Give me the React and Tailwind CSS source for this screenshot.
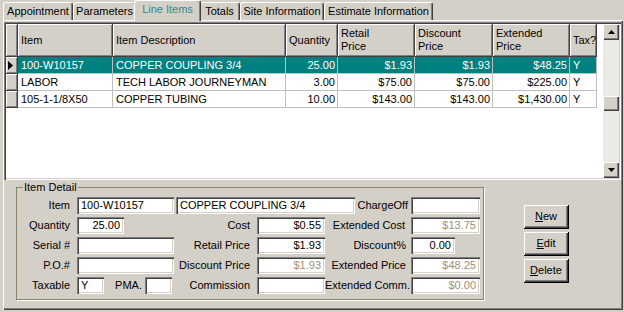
import React from "react";

const raised = "shadow-[inset_1px_1px_#ffffff,inset_-1px_-1px_#404040,inset_-2px_-2px_#808080]";
const sunken = "shadow-[inset_1px_1px_#808080,inset_2px_2px_#404040,inset_-1px_-1px_#ffffff,inset_-2px_-2px_#d4d0c8]";

const rows = [
  { item: "100-W10157", desc: "COPPER COUPLING 3/4", qty: "25.00", retail: "$1.93", disc: "$1.93", ext: "$48.25", tax: "Y", sel: true },
  { item: "LABOR", desc: "TECH LABOR JOURNEYMAN", qty: "3.00", retail: "$75.00", disc: "$75.00", ext: "$225.00", tax: "Y" },
  { item: "105-1-1/8X50", desc: "COPPER TUBING", qty: "10.00", retail: "$143.00", disc: "$143.00", ext: "$1,430.00", tax: "Y" },
];

const tabs = [
  { label: "Appointment", w: "w-[70px]" },
  { label: "Parameters", w: "w-[63px]" },
  { label: "Line Items", w: "w-[67px]", active: true },
  { label: "Totals", w: "w-[41px]" },
  { label: "Site Information", w: "w-[84px]" },
  { label: "Estimate Information", w: "w-[109px]" },
];

function Tab({ label, w, active }) {
  if (active) {
    return (
      <div className={`${w} -mx-[2px] -mb-[1px] h-[21px] relative z-10 bg-[#d4d0c8] rounded-t-[3px] border-l border-t border-white border-r border-r-[#404040] shadow-[inset_-1px_0_#808080] text-center pt-[2px] leading-[13px] text-[#2f8a8a]`}>
        {label}
      </div>
    );
  }
  return (
    <div className={`${w} h-[18px] rounded-t-[3px] border-l border-t border-white border-r border-r-[#404040] shadow-[inset_-1px_0_#808080] text-center pt-[2px] leading-[13px]`}>
      {label}
    </div>
  );
}

function HeadCell({ children, right }) {
  return (
    <div className={`h-[33px] bg-[#d4d0c8] border-r border-b border-[#404040] shadow-[inset_1px_1px_#ffffff,inset_-1px_-1px_#808080] flex items-center px-[3px] leading-[13px] ${right ? "justify-end" : ""}`}>
      <span>{children}</span>
    </div>
  );
}

function Cell({ children, right, sel }) {
  return (
    <div className={`h-[17px] border-r border-b border-[#c0c0c0] px-[2px] leading-[16px] whitespace-nowrap overflow-hidden ${right ? "text-right" : "pl-[3px]"} ${sel ? "bg-[#008080] text-white" : ""}`}>
      {children}
    </div>
  );
}

function ScrollBtn({ up }) {
  return (
    <div className={`h-[16px] w-[16px] bg-[#d4d0c8] ${raised} flex items-center justify-center`}>
      <svg width="7" height="4" viewBox="0 0 7 4">
        {up ? <polygon points="3.5,0 7,4 0,4" fill="#000" /> : <polygon points="0,0 7,0 3.5,4" fill="#000" />}
      </svg>
    </div>
  );
}

function Field({ w, value, right, gray }) {
  return (
    <div className={`${w} h-[17px] bg-white ${sunken} px-[4px] leading-[17px] whitespace-nowrap overflow-hidden ${right ? "text-right" : ""} ${gray ? "text-[#9e9078]" : ""}`}>
      {value}
    </div>
  );
}

function Label({ w, pr, children }) {
  return <div className={`${w} ${pr} text-right leading-[17px] whitespace-nowrap`}>{children}</div>;
}

function Button({ children }) {
  return (
    <div className={`w-[45px] h-[24px] bg-[#d4d0c8] ${raised} border-r border-b border-[#000000] flex items-center justify-center leading-[13px]`}>
      {children}
    </div>
  );
}

export default function App() {
  return (
    <div className="w-[624px] h-[312px] bg-[#d4d0c8] overflow-hidden text-[11px] text-black font-['Liberation_Sans',Arial,sans-serif]">
      <div className="h-[20px] flex items-end pl-[3px]">
        {tabs.map((t) => (
          <Tab key={t.label} {...t} />
        ))}
      </div>

      <div className="ml-[3px] w-[620px] h-[290px] border-l border-t border-white shadow-[inset_-1px_-1px_#404040,inset_-2px_-2px_#808080]">
        <div className="mt-[1px] w-[617px] h-[158px] shadow-[inset_1px_1px_#808080,inset_2px_2px_#404040,inset_-1px_-1px_#ffffff,inset_-2px_-2px_#d4d0c8] p-[2px] flex">
          <div className="flex-1 bg-white">
            <div className="grid grid-cols-[12px_95px_173px_52px_77px_78px_77px_27px]">
              <HeadCell />
              <HeadCell>Item</HeadCell>
              <HeadCell>Item Description</HeadCell>
              <HeadCell>Quantity</HeadCell>
              <HeadCell>Retail<br />Price</HeadCell>
              <HeadCell>Discount<br />Price</HeadCell>
              <HeadCell>Extended<br />Price</HeadCell>
              <HeadCell>Tax?</HeadCell>
              {rows.map((r) => (
                <React.Fragment key={r.item}>
                  <div className="h-[17px] bg-[#d4d0c8] border-r border-b border-[#404040] shadow-[inset_1px_1px_#ffffff,inset_-1px_-1px_#808080] flex items-center pl-[2px]">
                    {r.sel && (
                      <svg width="5" height="9" viewBox="0 0 5 9">
                        <polygon points="0,0 5,4.5 0,9" fill="#000" />
                      </svg>
                    )}
                  </div>
                  <Cell sel={r.sel}>{r.item}</Cell>
                  <Cell sel={r.sel}>{r.desc}</Cell>
                  <Cell sel={r.sel} right>{r.qty}</Cell>
                  <Cell sel={r.sel} right>{r.retail}</Cell>
                  <Cell sel={r.sel} right>{r.disc}</Cell>
                  <Cell sel={r.sel} right>{r.ext}</Cell>
                  <Cell sel={r.sel}>{r.tax}</Cell>
                </React.Fragment>
              ))}
            </div>
          </div>
          <div className="w-[16px] flex flex-col bg-[#ebe9e3]">
            <ScrollBtn up />
            <div className="flex-1">
              <div className={`mt-[56px] h-[15px] w-[16px] bg-[#d4d0c8] ${raised}`} />
            </div>
            <ScrollBtn />
          </div>
        </div>

        <div className="flex">
          <fieldset className="ml-[12px] mt-[1px] w-[468px] h-[119px] border border-[#8c8268] shadow-[1px_1px_0_#ffffff] px-0 pt-[3px]">
            <legend className="ml-[6px] px-[1px] leading-[13px]">Item Detail</legend>
            <div className="flex flex-col gap-[3px]">
              <div className="flex">
                <Label w="w-[60px]" pr="pr-[7px]">Item</Label>
                <Field w="w-[97px]" value="100-W10157" />
                <div className="w-[2px]" />
                <Field w="w-[179px]" value="COPPER COUPLING 3/4" />
                <Label w="w-[56px]" pr="pr-[3px]">ChargeOff</Label>
                <Field w="w-[69px]" value="" />
              </div>
              <div className="flex">
                <Label w="w-[60px]" pr="pr-[7px]">Quantity</Label>
                <Field w="w-[47px]" value="25.00" right />
                <Label w="w-[133px]" pr="pr-[7px]">Cost</Label>
                <Field w="w-[68px]" value="$0.55" right />
                <Label w="w-[86px]" pr="pr-[6px]">Extended Cost</Label>
                <Field w="w-[69px]" value="$13.75" right gray />
              </div>
              <div className="flex">
                <Label w="w-[60px]" pr="pr-[7px]">Serial #</Label>
                <Field w="w-[97px]" value="" />
                <Label w="w-[83px]" pr="pr-[7px]">Retail Price</Label>
                <Field w="w-[68px]" value="$1.93" right />
                <Label w="w-[86px]" pr="pr-[5px]">Discount%</Label>
                <Field w="w-[44px]" value="0.00" right />
              </div>
              <div className="flex">
                <Label w="w-[60px]" pr="pr-[7px]">P.O.#</Label>
                <Field w="w-[97px]" value="" />
                <Label w="w-[83px]" pr="pr-[7px]">Discount Price</Label>
                <Field w="w-[68px]" value="$1.93" right gray />
                <Label w="w-[86px]" pr="pr-[5px]">Extended Price</Label>
                <Field w="w-[69px]" value="$48.25" right gray />
              </div>
              <div className="flex">
                <Label w="w-[60px]" pr="pr-[7px]">Taxable</Label>
                <Field w="w-[27px]" value="Y" />
                <Label w="w-[41px]" pr="pr-[3px]">PMA.</Label>
                <Field w="w-[27px]" value="" />
                <Label w="w-[85px]" pr="pr-[7px]">Commission</Label>
                <Field w="w-[68px]" value="" right />
                <Label w="w-[86px]" pr="pr-[4px]">Extended Comm.</Label>
                <Field w="w-[69px]" value="$0.00" right gray />
              </div>
            </div>
          </fieldset>

          <div className="ml-[40px] mt-[25px] flex flex-col gap-[3px]">
            <Button><span className="underline">N</span>ew</Button>
            <Button><span className="underline">E</span>dit</Button>
            <Button><span className="underline">D</span>elete</Button>
          </div>
        </div>
      </div>
    </div>
  );
}
